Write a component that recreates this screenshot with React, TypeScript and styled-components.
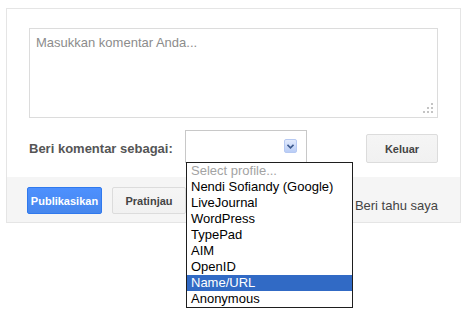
import React from "react";
import styled, { createGlobalStyle } from "styled-components";

const Global = createGlobalStyle`
  html, body { margin: 0; padding: 0; background: #ffffff; }
  body { font-family: "Liberation Sans", Arial, sans-serif; }
  * { box-sizing: border-box; }
`;

const Page = styled.div`
  padding: 8px 0 0 6px;
  width: 467px;
  height: 315px;
`;

const Card = styled.div`
  width: 455px;
  border: 1px solid #e5e5e5;
  background: #fff;
`;

const Top = styled.div`
  padding: 19px 22px 14px 22px;
`;

const AreaWrap = styled.div`
  position: relative;
  width: 409px;
  height: 90px;
`;

const Area = styled.textarea`
  display: block;
  width: 100%;
  height: 100%;
  resize: none;
  border: 1px solid #dcdcdc;
  padding: 6px 6px;
  margin: 0;
  font-family: "Liberation Sans", Arial, sans-serif;
  font-size: 13px;
  line-height: 16px;
  color: #333;
  outline: none;
  &::placeholder { color: #8c8c8c; }
`;

const Grip = styled.svg`
  position: absolute;
  right: 4px;
  bottom: 4px;
`;

const Row = styled.div`
  display: flex;
  align-items: flex-start;
  height: 33px;
  margin-top: 12px;
`;

const Label = styled.div`
  width: 156px;
  margin-top: 11px;
  font-size: 13px;
  line-height: 16px;
  font-weight: bold;
  color: #555;
  white-space: nowrap;
`;

const SelectWrap = styled.div`
  position: relative;
  width: 122px;
  height: 33px;
`;

const SelectBox = styled.div`
  width: 100%;
  height: 100%;
  border: 1px solid #c8c8c8;
  background: #fff;
  position: relative;
`;

const ArrowBtn = styled.div`
  position: absolute;
  right: 9px;
  top: 8px;
  width: 13px;
  height: 14px;
  border-radius: 2px;
  border: 1px solid #b6c9f2;
  background: linear-gradient(#e2ebfd, #b9cdf6);
  display: flex;
  align-items: center;
  justify-content: center;
`;

const List = styled.div`
  position: absolute;
  top: 32px;
  left: 1px;
  width: 167px;
  border: 1px solid #1e1e1e;
  background: #fff;
  z-index: 5;
`;

const Item = styled.div<{ $muted?: boolean; $active?: boolean }>`
  height: 16px;
  line-height: 16px;
  padding-left: 4px;
  font-size: 13px;
  white-space: nowrap;
  color: ${(p) => (p.$active ? "#fff" : p.$muted ? "#a3a3a3" : "#000")};
  background: ${(p) => (p.$active ? "#316ac5" : "transparent")};
`;

const Button = styled.button<{ $primary?: boolean; $w: number; $h: number }>`
  width: ${(p) => p.$w}px;
  height: ${(p) => p.$h}px;
  padding: 0;
  border-radius: 2px;
  font-family: "Liberation Sans", Arial, sans-serif;
  font-size: 11px;
  font-weight: bold;
  border: 1px solid ${(p) => (p.$primary ? "#3079ed" : "#dcdcdc")};
  background: ${(p) =>
    p.$primary ? "linear-gradient(#4d90fe, #4787ed)" : "linear-gradient(#f5f5f5, #f1f1f1)"};
  color: ${(p) => (p.$primary ? "#fff" : "#444")};
  cursor: pointer;
`;

const KeluarBtn = styled(Button)`
  margin-left: auto;
  margin-top: 4px;
`;

const Footer = styled.div`
  background: #f5f5f5;
  height: 45px;
  padding: 10px 22px 0 20px;
  display: flex;
  align-items: flex-start;
  gap: 10px;
`;

const Notify = styled.div`
  margin-left: auto;
  margin-top: 11px;
  font-size: 13px;
  line-height: 16px;
  color: #444;
  white-space: nowrap;
`;

const items = [
  "Nendi Sofiandy (Google)",
  "LiveJournal",
  "WordPress",
  "TypePad",
  "AIM",
  "OpenID",
  "Name/URL",
  "Anonymous",
];

export default function App() {
  return (
    <Page>
      <Global />
      <Card>
        <Top>
          <AreaWrap>
            <Area placeholder="Masukkan komentar Anda..." />
            <Grip width="12" height="11" viewBox="0 0 12 11">
              <rect x="9" y="0" width="2" height="2" fill="#c4c4c4" />
              <rect x="5" y="4" width="2" height="2" fill="#c4c4c4" />
              <rect x="9" y="4" width="2" height="2" fill="#c4c4c4" />
              <rect x="1" y="8" width="2" height="2" fill="#c4c4c4" />
              <rect x="5" y="8" width="2" height="2" fill="#c4c4c4" />
              <rect x="9" y="8" width="2" height="2" fill="#c4c4c4" />
            </Grip>
          </AreaWrap>
          <Row>
            <Label>Beri komentar sebagai:</Label>
            <SelectWrap>
              <SelectBox>
                <ArrowBtn>
                  <svg width="7" height="5" viewBox="0 0 7 5">
                    <path d="M0.5 0.8 L3.5 3.8 L6.5 0.8" stroke="#3d5a8e" strokeWidth="1.6" fill="none" />
                  </svg>
                </ArrowBtn>
              </SelectBox>
              <List>
                <Item $muted>Select profile...</Item>
                {items.map((t) => (
                  <Item key={t} $active={t === "Name/URL"}>
                    {t}
                  </Item>
                ))}
              </List>
            </SelectWrap>
            <KeluarBtn $w={72} $h={29}>Keluar</KeluarBtn>
          </Row>
        </Top>
        <Footer>
          <Button $primary $w={75} $h={27}>Publikasikan</Button>
          <Button $w={74} $h={27}>Pratinjau</Button>
          <Notify>Beri tahu saya</Notify>
        </Footer>
      </Card>
    </Page>
  );
}
